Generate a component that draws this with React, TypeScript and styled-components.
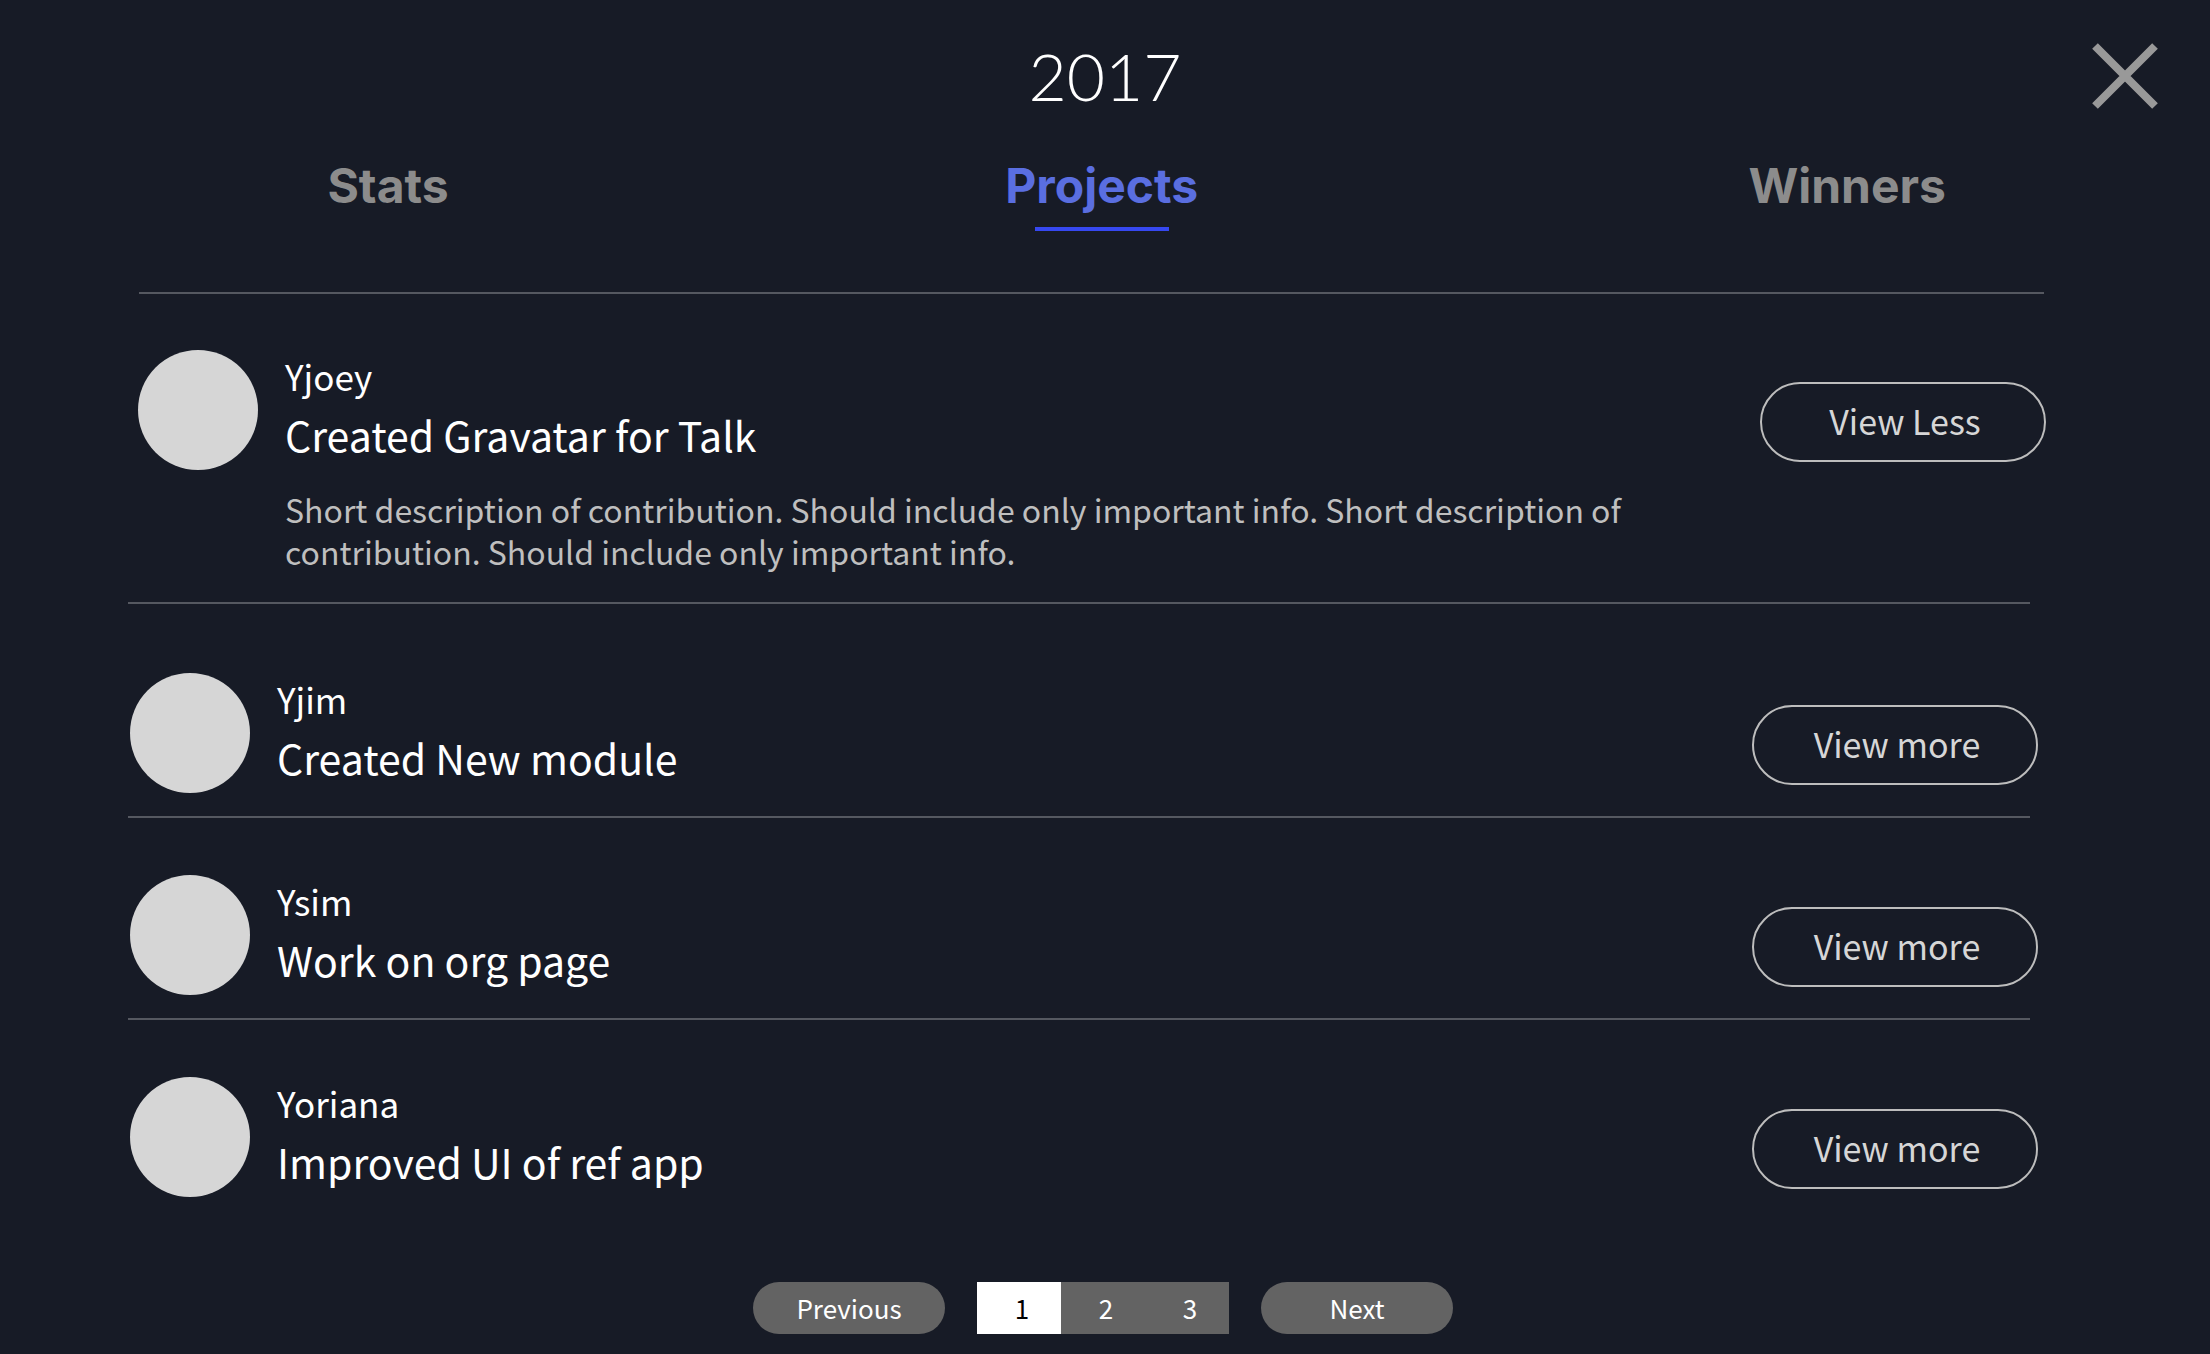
import React, { useState } from "react";
import styled, { createGlobalStyle } from "styled-components";

const body = `"Noto Sans CJK SC", "Noto Sans", sans-serif`;
const display = `Lato, "Open Sans", sans-serif`;
const heading = `Inter, "Open Sans", sans-serif`;

const GlobalStyle = createGlobalStyle`
  *, *::before, *::after { box-sizing: border-box; }
  body { margin: 0; background: #171b26; color: #fff; font-family: ${body}; }
  button { font: inherit; color: inherit; border: 0; padding: 0; background: none; cursor: pointer; }
`;

const Page = styled.main`
  min-height: 100vh;
  display: flex;
  flex-direction: column;
  padding: 36px 0 20px;
`;

const Header = styled.header`
  display: grid;
  grid-template-columns: 1fr auto 1fr;
  align-items: center;
  padding: 0 52px;
`;

const Year = styled.h1`
  grid-column: 2;
  margin: 0;
  font: 300 66px/80px ${display};
`;

const CloseButton = styled.button`
  justify-self: end;
  display: flex;
`;

const Tabs = styled.nav`
  display: flex;
  justify-content: space-between;
  align-items: flex-start;
  padding: 0 264px 0 321px;
  margin-top: 40px;
`;

const Tab = styled.button<{ $active: boolean }>`
  display: flex;
  flex-direction: column;
  align-items: center;
  height: 76px;
  font: 700 48px/60px ${heading};
  color: ${(p) => (p.$active ? "#5a6ee0" : "#8c8c8c")};

  &::after {
    content: "";
    width: 134px;
    height: 4px;
    margin-top: 11px;
    background: ${(p) => (p.$active ? "#3648f0" : "transparent")};
  }
`;

const TabRule = styled.hr`
  width: auto;
  height: 2px;
  border: 0;
  margin: 60px 166px 0 139px;
  background: #555860;
`;

const List = styled.ul`
  list-style: none;
  margin: 0;
  padding: 0 172px 0 130px;
`;

const Item = styled.li<{ $open: boolean }>`
  &:not(:last-child)::after {
    content: "";
    display: block;
    height: 2px;
    margin: 0 8px ${(p) => (p.$open ? 12 : 0)}px -2px;
    background: #555860;
  }
`;

const Entry = styled.article<{ $open: boolean }>`
  display: flex;
  align-items: flex-start;
  padding: ${(p) => (p.$open ? "56px 0 30px" : "57px 0 23px")};
  margin: ${(p) => (p.$open ? "0 -8px 0 8px" : "0")};
`;

const Avatar = styled.div`
  flex: none;
  width: 120px;
  height: 120px;
  border-radius: 50%;
  background: #d6d6d6;
`;

const Info = styled.div`
  flex: 1;
  min-width: 0;
  padding: 0 96px 0 27px;
`;

const Name = styled.p`
  margin: 0;
  font-size: 35px;
  line-height: 52px;
`;

const Title = styled.h2`
  margin: 0;
  font-size: 41px;
  line-height: 64px;
  font-weight: 400;
`;

const Description = styled.p`
  max-width: 1380px;
  margin: 22px 0 0;
  font-size: 32px;
  line-height: 42px;
  color: #bfbfbf;
`;

const ToggleButton = styled.button`
  flex: none;
  width: 286px;
  height: 80px;
  margin-top: 32px;
  padding: 0 0 2px 4px;
  border: 2px solid #bdbdbd;
  border-radius: 40px;
  font-size: 34px;
  line-height: 50px;
  color: #d6d6d6;
`;

const Pagination = styled.nav`
  display: flex;
  justify-content: center;
  gap: 32px;
  margin-top: auto;
  padding-right: 4px;
  font-size: 26px;
  line-height: 52px;
`;

const StepButton = styled.button`
  width: 192px;
  height: 52px;
  border-radius: 26px;
  background: #636363;
`;

const Pages = styled.div`
  display: flex;
`;

const PageButton = styled.button<{ $current: boolean }>`
  width: 84px;
  height: 52px;
  padding-left: 6px;
  background: ${(p) => (p.$current ? "#fff" : "#636363")};
  color: ${(p) => (p.$current ? "#000" : "#fff")};
`;

const tabs = ["Stats", "Projects", "Winners"];
const text =
  "Short description of contribution. Should include only important info. Short description of contribution. Should include only important info.";
const projects = [
  { name: "Yjoey", title: "Created Gravatar for Talk" },
  { name: "Yjim", title: "Created New module" },
  { name: "Ysim", title: "Work on org page" },
  { name: "Yoriana", title: "Improved UI of ref app" },
];

export default function App() {
  const [tab, setTab] = useState("Projects");
  const [open, setOpen] = useState<string | null>("Yjoey");
  const [page, setPage] = useState(1);

  return (
    <>
      <GlobalStyle />
      <Page>
        <Header>
          <Year>2017</Year>
          <CloseButton aria-label="Close">
            <svg width="66" height="66" viewBox="0 0 66 66" stroke="#999" strokeWidth="8">
              <path d="M3 3L63 63M63 3L3 63" />
            </svg>
          </CloseButton>
        </Header>
        <Tabs>
          {tabs.map((t) => (
            <Tab key={t} $active={t === tab} onClick={() => setTab(t)}>
              {t}
            </Tab>
          ))}
        </Tabs>
        <TabRule />
        <List>
          {projects.map((p) => {
            const isOpen = p.name === open;
            return (
              <Item key={p.name} $open={isOpen}>
                <Entry $open={isOpen}>
                  <Avatar />
                  <Info>
                    <Name>{p.name}</Name>
                    <Title>{p.title}</Title>
                    {isOpen && <Description>{text}</Description>}
                  </Info>
                  <ToggleButton aria-expanded={isOpen} onClick={() => setOpen(isOpen ? null : p.name)}>
                    {isOpen ? "View Less" : "View more"}
                  </ToggleButton>
                </Entry>
              </Item>
            );
          })}
        </List>
        <Pagination aria-label="Pages">
          <StepButton onClick={() => setPage(Math.max(1, page - 1))}>Previous</StepButton>
          <Pages>
            {[1, 2, 3].map((n) => (
              <PageButton key={n} $current={n === page} onClick={() => setPage(n)}>
                {n}
              </PageButton>
            ))}
          </Pages>
          <StepButton onClick={() => setPage(Math.min(3, page + 1))}>Next</StepButton>
        </Pagination>
      </Page>
    </>
  );
}
